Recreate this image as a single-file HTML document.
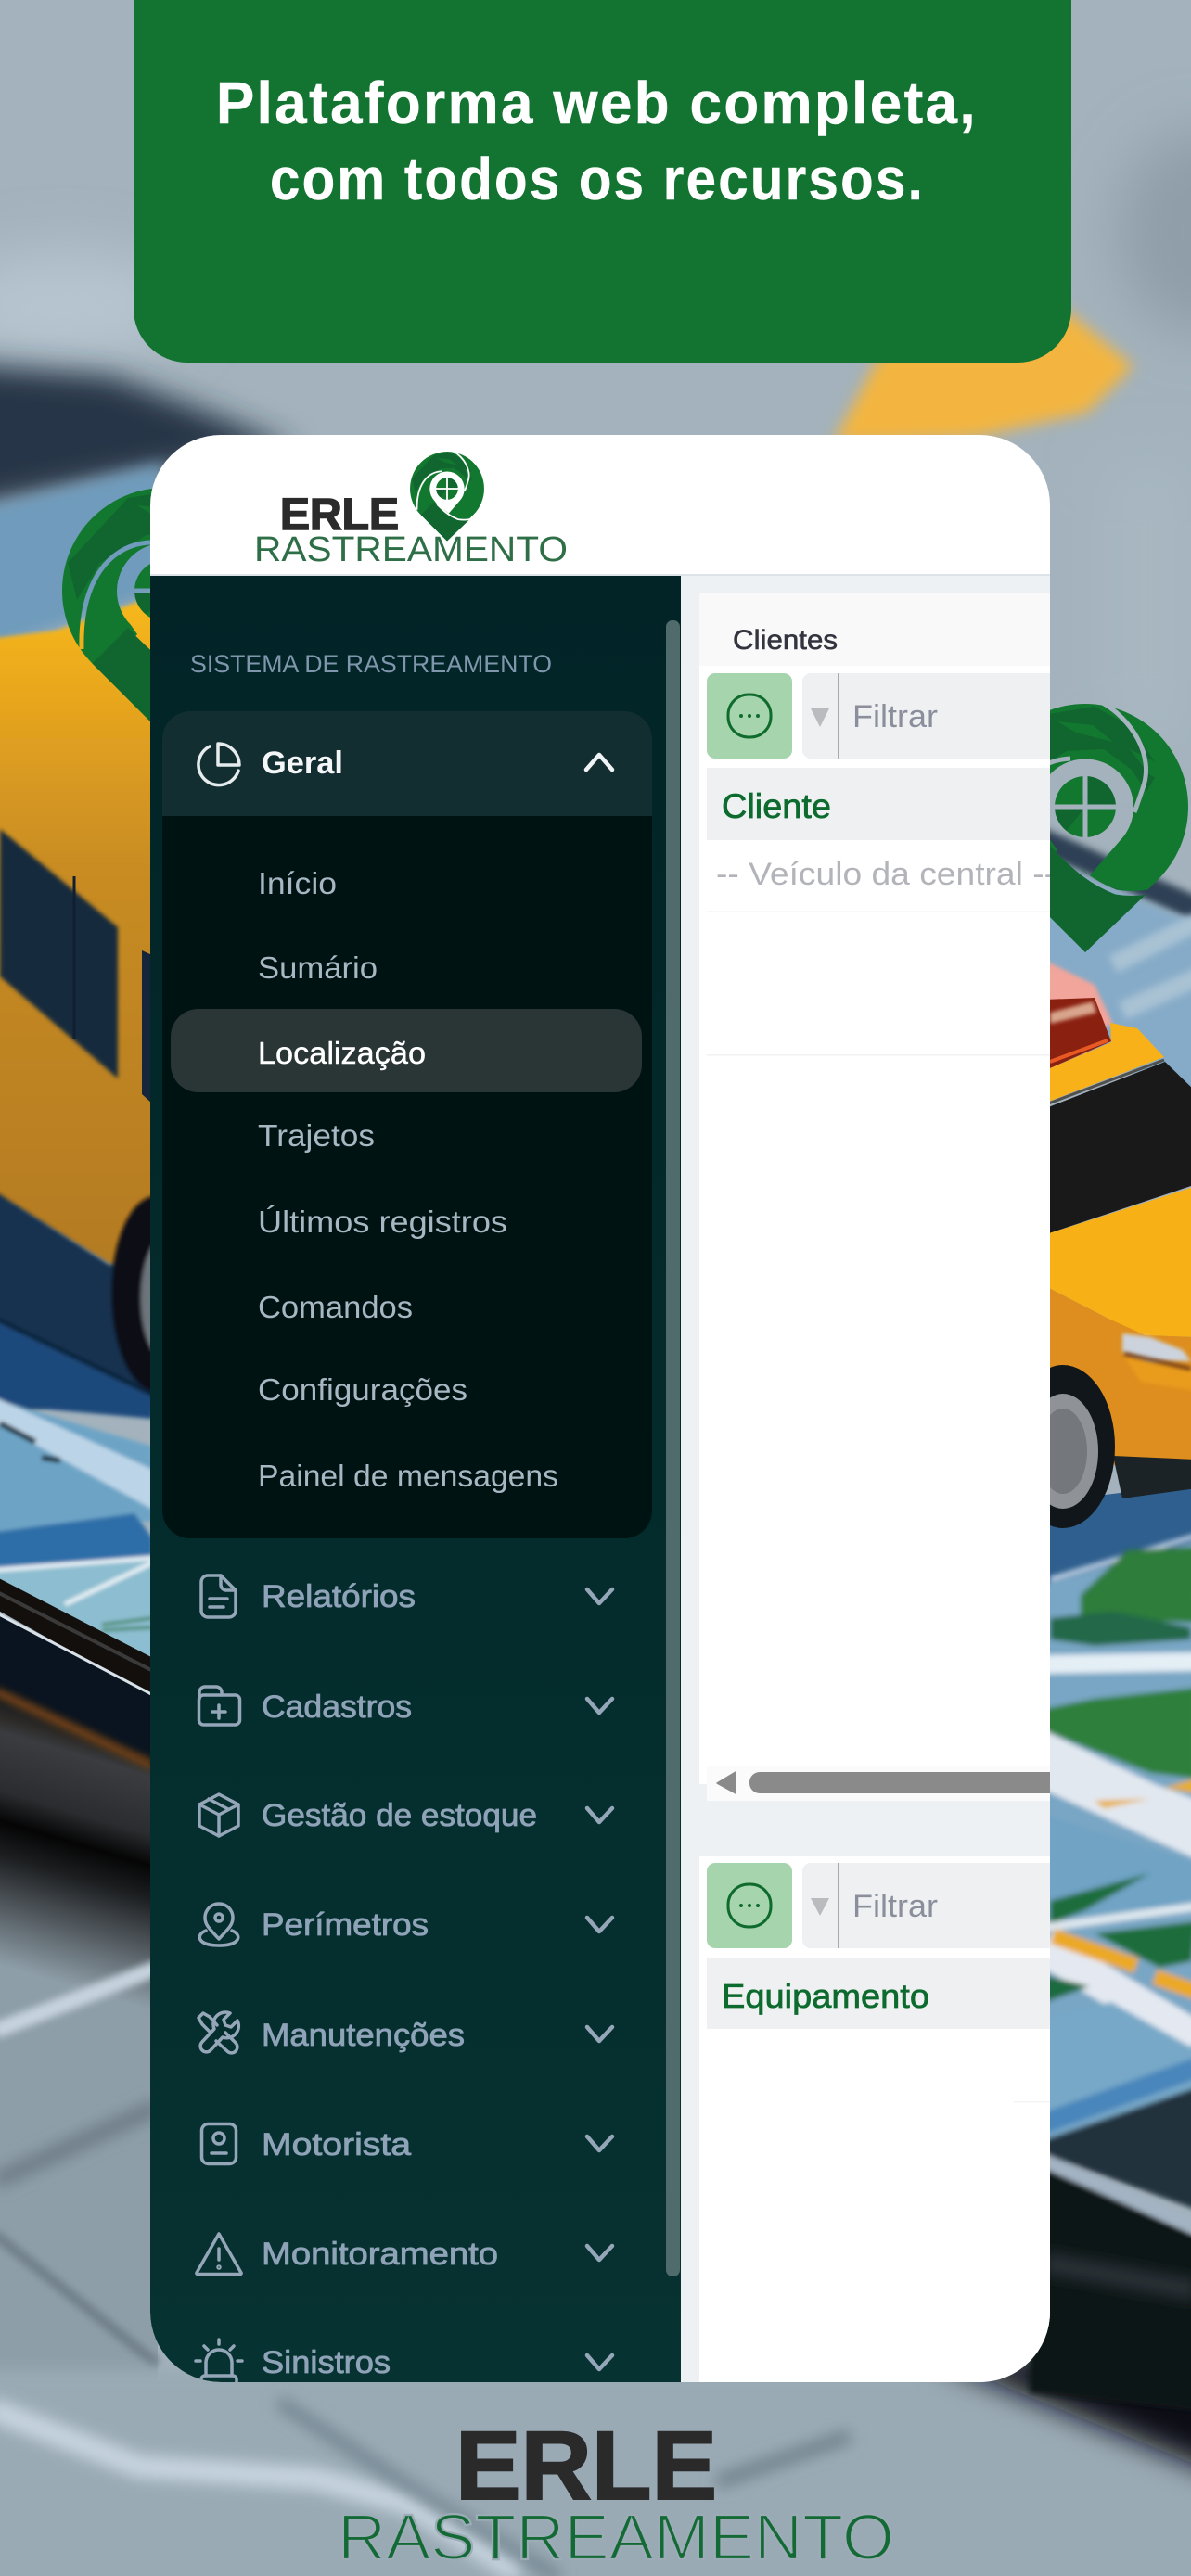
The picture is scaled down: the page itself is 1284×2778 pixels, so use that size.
<!DOCTYPE html>
<html lang="pt-BR">
<head>
<meta charset="utf-8">
<title>ERLE Rastreamento</title>
<style>
html,body{margin:0;padding:0;background:#a4b3bd;width:1284px;height:2778px;overflow:hidden}
svg{display:block}
text{font-family:"Liberation Sans",sans-serif}
.sub{font-size:33px;fill:#a9b7c3}
.main{font-size:34px;fill:#8fa3b8;stroke:#8fa3b8;stroke-width:.8px}
.ic{fill:none;stroke:#94a6b8;stroke-width:3.5;stroke-linecap:round;stroke-linejoin:round}
</style>
</head>
<body>
<svg xmlns="http://www.w3.org/2000/svg" width="1284" height="2778" viewBox="0 0 1284 2778">
<defs>
  <filter id="b2" filterUnits="userSpaceOnUse" x="-100" y="-100" width="1500" height="3000"><feGaussianBlur stdDeviation="2"/></filter>
  <filter id="b3" filterUnits="userSpaceOnUse" x="-100" y="-100" width="1500" height="3000"><feGaussianBlur stdDeviation="3"/></filter>
  <filter id="b4" filterUnits="userSpaceOnUse" x="-100" y="-100" width="1500" height="3000"><feGaussianBlur stdDeviation="4"/></filter>
  <filter id="b8" filterUnits="userSpaceOnUse" x="-100" y="-100" width="1500" height="3000"><feGaussianBlur stdDeviation="8"/></filter>
  <filter id="b16" filterUnits="userSpaceOnUse" x="-100" y="-100" width="1500" height="3000"><feGaussianBlur stdDeviation="16"/></filter>
  <filter id="b30" filterUnits="userSpaceOnUse" x="-100" y="-100" width="1500" height="3000"><feGaussianBlur stdDeviation="30"/></filter>
  <clipPath id="card2"><rect x="162" y="469" width="970" height="2100" rx="76" ry="76"/></clipPath>
  <linearGradient id="side" x1="0" y1="0" x2="0" y2="1"><stop offset="0" stop-color="#022427"/><stop offset="1" stop-color="#063231"/></linearGradient>
  <linearGradient id="busY" x1="0" y1="0" x2="0" y2="1"><stop offset="0" stop-color="#f8b919"/><stop offset=".18" stop-color="#e4a31f"/><stop offset=".4" stop-color="#c88c24"/><stop offset="1" stop-color="#b37a20"/></linearGradient>
  <linearGradient id="lowgray" gradientUnits="userSpaceOnUse" x1="0" y1="1820" x2="-82" y2="2095">
    <stop offset="0" stop-color="#0a1420"/><stop offset=".1" stop-color="#2b2926"/><stop offset=".16" stop-color="#3a3c40"/>
    <stop offset=".37" stop-color="#2a2c2f"/><stop offset=".48" stop-color="#050505"/><stop offset=".6" stop-color="#1c1e20"/>
    <stop offset=".77" stop-color="#4e555a"/><stop offset="1" stop-color="#8e9ea8"/>
  </linearGradient>
  <mask id="pm" maskUnits="userSpaceOnUse" x="-130" y="-130" width="260" height="300">
    <rect x="-130" y="-130" width="260" height="300" fill="#fff"/>
    <path d="M5 74 L37 37 A52 52 0 1 0 -37 37 L-30 47 Z" fill="#000"/>
    <circle r="33" fill="#fff"/>
    <rect x="-34" y="-2.5" width="68" height="5" fill="#000"/>
    <rect x="-2.5" y="-34" width="5" height="68" fill="#000"/>
    <path d="M17 -113 C50 -95 75 -55 62 -20 Q58 -8 53 6" fill="none" stroke="#000" stroke-width="5"/>
    <path d="M-30 47 C-14 62 2 80 33 92 Q50 95 68 92" fill="none" stroke="#000" stroke-width="5"/>
    <path d="M-16 -52 C-60 -50 -92 -10 -90 63" fill="none" stroke="#000" stroke-width="5"/>
  </mask>
  <g id="pin">
    <g mask="url(#pm)">
      <path d="M0 157 L-78.5 78.5 A111 111 0 1 1 78.5 78.5 Z" fill="#12782f"/>
      <path d="M0 157 L-78.5 78.5 L-40 40 C-10 72 30 95 68 92 Z" fill="#116630"/>
      <path d="M-40 -100 L10 -108 L52 -85 L80 -40 L66 -16 L50 -40 L20 -62 L-20 -60 L-70 -30 L-95 10 L-105 -30 Z" fill="#116630"/>
      <path d="M-30 -92 L8 -88 L30 -70 L-10 -80 Z M48 -62 L88 -42 L100 -20 L70 -34 Z M60 -10 L95 -12 L84 0 Z" fill="#12782f"/>
      <path d="M0 -33 A33 33 0 0 1 33 0 L0 0 Z M0 0 L-33 0 A33 33 0 0 0 -20 26 Z" fill="#116630"/>
    </g>
  </g>
</defs>

<!-- BACKGROUND -->
<rect width="1284" height="2778" fill="#a3b2bc"/>
<g filter="url(#b30)">
  <ellipse cx="70" cy="330" rx="130" ry="60" fill="#b6c5cf"/>
  <ellipse cx="1295" cy="250" rx="90" ry="110" fill="#8f9ea8"/>
  <rect x="1190" y="500" width="94" height="300" fill="#a8b7c1"/>
</g>
<path d="M1150 335 L1222 395 L1172 445 L1050 472 L898 478 L950 380 Z" fill="#f3b540" filter="url(#b8)"/>
<path d="M-40 392 L120 405 L225 445 L320 485 L200 505 L164 510 L-40 550 Z" fill="#283447" filter="url(#b16)"/>
<path d="M-20 548 L175 500 L175 640 L-20 705 Z" fill="#6f9bbc" filter="url(#b8)"/>
<path d="M-20 690 L60 680 L175 640 L175 1380 L130 1370 L13 1300 L-20 1290 Z" fill="url(#busY)" filter="url(#b2)"/>
<path d="M0 894 L127 1000 L127 1163 L0 1053 Z" fill="#17293d" filter="url(#b2)"/>
<path d="M80 945 L80 1120" stroke="#0f1f30" stroke-width="3"/>
<path d="M153 1025 L164 1030 L164 1190 L153 1180 Z" fill="#15263a"/>
<!-- left road -->
<g filter="url(#b2)">
<path d="M-5 1285 L118 1364 L170 1350 L170 1520 L-5 1520 Z" fill="#12304f"/>
<ellipse cx="168" cy="1395" rx="48" ry="105" fill="#0b0f14"/>
<ellipse cx="174" cy="1400" rx="22" ry="62" fill="#6d747c"/>
<path d="M-5 1422 L165 1504 L165 1530 L-5 1515 Z" fill="#1a4a7c"/>
<path d="M-5 1422 L165 1504" stroke="#0e2238" stroke-width="5" fill="none"/>
<path d="M-5 1509 L165 1560 L165 1640 L-5 1660 Z" fill="#6da4c6"/>
<path d="M-5 1507 L165 1585 L165 1628 L-5 1534 Z" fill="#bcd4e7"/>
<path d="M0 1535 L38 1555 M45 1572 L65 1575" stroke="#24303e" stroke-width="6" fill="none"/>
<path d="M-5 1652 L145 1632 L165 1660 L165 1700 L-5 1700 Z" fill="#2f6ea8"/>
<path d="M-5 1693 L165 1680 L165 1800 L-5 1715 Z" fill="#8cbdd0"/>
<path d="M-5 1693 L165 1680 M70 1730 L165 1685" stroke="#e7f0f5" stroke-width="5" fill="none"/>
<path d="M110 1752 L165 1745 M110 1758 L165 1755" stroke="#2d7d45" stroke-width="3" fill="none"/>
</g>
<path d="M-5 1740 L170 1830 L170 2569 L-5 2569 Z" fill="url(#lowgray)"/>
<path d="M-5 1700 L165 1788 L165 1830 L-5 1735 Z" fill="#120f0d"/>
<path d="M-5 1716 L165 1802" stroke="#3a3a3a" stroke-width="4" fill="none"/>
<path d="M-5 1739 L165 1828" stroke="#d9e2e9" stroke-width="3" fill="none"/>
<path d="M-5 1742 L165 1832 L165 1905 L-5 1822 Z" fill="#0a1420"/>
<path d="M-5 1824 L165 1904" stroke="#6f3f12" stroke-width="10" fill="none" filter="url(#b4)"/>
<path d="M-5 2190 L170 2122" stroke="#c6d3de" stroke-width="17" fill="none" filter="url(#b4)"/>
<path d="M-5 2352 L170 2272" stroke="#6d7c86" stroke-width="18" fill="none" filter="url(#b8)"/>
<path d="M-5 2410 L170 2550" stroke="#718089" stroke-width="12" fill="none" filter="url(#b4)"/>

<!-- bottom zone -->
<rect x="-50" y="2555" width="1400" height="280" fill="#9aaab5" filter="url(#b8)"/>
<path d="M-10 2598 L150 2660 L340 2673 L440 2700 L560 2775" stroke="#c8d5e0" stroke-width="24" fill="none" filter="url(#b8)"/>
<path d="M300 2590 L434 2677 L603 2780" stroke="#728590" stroke-width="14" fill="none" filter="url(#b8)"/>
<path d="M773 2677 L916 2627" stroke="#6f7f89" stroke-width="14" fill="none" filter="url(#b8)"/>
<path d="M1000 2540 L1320 2540 L1320 2670 L1210 2625 Z" fill="#0f1114" filter="url(#b16)"/>

<!-- right side -->
<path d="M1120 905 L1300 985" stroke="#2e3f55" stroke-width="26" fill="none" filter="url(#b4)"/>
<path d="M1120 925 L1300 1000 L1300 1200 L1120 1100 Z" fill="#86abc8" filter="url(#b4)"/>
<path d="M1200 1040 L1300 990 M1210 1090 L1300 1050" stroke="#a9c2d4" stroke-width="20" fill="none" filter="url(#b4)"/>
<path d="M1125 1035 L1180 1062 L1200 1105 L1125 1120 Z" fill="#f2a59a" filter="url(#b2)"/>
<path d="M1125 1078 L1180 1076 L1198 1123 L1125 1155 Z" fill="#8a2010"/>
<path d="M1132 1092 L1178 1080 L1182 1092 L1132 1104 Z" fill="#d8a58c" filter="url(#b2)"/>
<path d="M1132 1145 L1194 1122" stroke="#e85a24" stroke-width="4" fill="none"/>
<path d="M1125 1155 L1198 1124 L1197 1103 L1226 1109 L1255 1140 L1125 1190 Z" fill="#f8b119"/>
<path d="M1125 1196 L1256 1145 L1290 1178 L1290 1277 L1125 1332 Z" fill="#1a191a"/>
<path d="M1125 1192 L1255 1143" stroke="#50514e" stroke-width="3" fill="none"/>
<path d="M1125 1620 L1290 1600 L1290 1720 L1125 1720 Z" fill="#2f5f8e"/>
<path d="M1125 1332 L1290 1279 L1290 1442 L1230 1440 L1195 1422 L1125 1386 Z" fill="#f7b117"/>
<path d="M1125 1386 L1195 1422 L1235 1440 L1290 1442 L1290 1580 L1125 1580 Z" fill="#dd8e1e"/>
<path d="M1210 1460 L1290 1475 L1290 1500 L1230 1490 Z" fill="#e99c1e" filter="url(#b2)"/>
<path d="M1210 1438 L1240 1442 L1275 1456 L1284 1468 L1240 1468 L1210 1458 Z" fill="#ccd3dd" filter="url(#b2)"/>
<path d="M1212 1460 L1284 1476" stroke="#6a3412" stroke-width="4" fill="none" filter="url(#b2)"/>
<path d="M1200 1570 L1290 1574 L1290 1605 L1210 1616 Z" fill="#1b2326"/>
<ellipse cx="1146" cy="1560" rx="56" ry="88" fill="#11161a"/>
<ellipse cx="1146" cy="1565" rx="38" ry="62" fill="#8f9397"/>
<ellipse cx="1146" cy="1565" rx="26" ry="46" fill="#74787c"/>
<g filter="url(#b3)">
<path d="M1125 1708 L1290 1662 L1290 2300 L1125 2340 Z" fill="#78a6c4"/>
<path d="M1132 1703 L1290 1656" stroke="#c4d4e6" stroke-width="5" fill="none"/>
<path d="M1165 1720 L1215 1672 L1290 1668 L1290 1750 L1165 1745 Z" fill="#2e7d3b"/>
<path d="M1132 1745 L1200 1738 L1284 1755 L1284 1768 L1180 1775 L1132 1768 Z" fill="#23684a"/>
<path d="M1125 1795 L1290 1792" stroke="#e4eef5" stroke-width="20" fill="none"/>
<path d="M1125 1843 L1180 1832 L1290 1820 L1290 1918 L1240 1912 L1125 1866 Z" fill="#2f7f3a"/>
<path d="M1125 1866 L1245 1924 L1290 1941 L1290 2005 L1125 1930 Z" fill="#e2e8f0"/>
<path d="M1180 1942 L1240 1940 L1190 1950 Z M1255 1928 L1290 1918 L1290 1934 Z" fill="#e8ad2a"/>
<path d="M1125 1958 L1290 2010 L1290 2050 L1125 2073 Z" fill="#6fa3c4"/>
<path d="M1132 2050 L1240 2020 L1170 2060 L1132 2075 Z" fill="#1f6d3a"/>
<path d="M1125 2079 L1290 2056" stroke="#dfe8ef" stroke-width="9" fill="none"/>
<path d="M1180 2085 L1290 2072 L1285 2115 L1250 2122 Z" fill="#1e6d3a"/>
<path d="M1125 2100 L1290 2199" stroke="#e4e9f1" stroke-width="38" fill="none"/>
<path d="M1135 2088 L1225 2120 M1245 2132 L1290 2148" stroke="#eba928" stroke-width="17" fill="none"/>
<path d="M1125 2130 L1175 2142 L1125 2160 Z" fill="#1d6a3f"/>
<path d="M1125 2176 L1198 2159 L1290 2211 L1290 2251 L1125 2303 Z" fill="#77a8c8"/>
<path d="M1125 2290 L1290 2230" stroke="#4a86bb" stroke-width="22" fill="none"/>
<path d="M1125 2308 L1290 2251 L1290 2383 L1125 2323 Z" fill="#22313e"/>
<path d="M1110 2330 L1290 2412 L1290 2600 L1110 2580 Z" fill="#101215"/>
<path d="M1125 2330 L1290 2402" stroke="#a3b3c3" stroke-width="15" fill="none"/>
</g>
<path d="M1125 2440 L1290 2470" stroke="#2a3037" stroke-width="22" fill="none" filter="url(#b8)"/>

<!-- pins behind card -->
<use href="#pin" transform="translate(1170,870)"/>
<use href="#pin" transform="translate(178,637)"/>

<!-- GREEN TITLE -->
<rect x="144" y="-80" width="1011" height="471" rx="58" ry="58" fill="#137330"/>
<text x="233" y="133" font-size="64" font-weight="700" letter-spacing="2.5" fill="#fff" stroke="#fff" stroke-width=".5" textLength="821" lengthAdjust="spacingAndGlyphs">Plataforma web completa,</text>
<text x="291" y="215" font-size="64" font-weight="700" letter-spacing="2.5" fill="#fff" stroke="#fff" stroke-width=".5" textLength="706" lengthAdjust="spacingAndGlyphs">com todos os recursos.</text>

<!-- CARD -->
<g clip-path="url(#card2)">
  <rect x="162" y="469" width="970" height="2100" fill="#fff"/>
  <rect x="162" y="619" width="970" height="2" fill="#dde3e8"/>
  <rect x="162" y="621" width="572" height="1948" fill="url(#side)"/>
  <rect x="718" y="669" width="15" height="1786" rx="7" fill="#4f6b6b"/>

  <rect x="734" y="621" width="398" height="1948" fill="#edf1f4"/>
  <rect x="754" y="640" width="378" height="1302" fill="#fff"/>
  <rect x="754" y="640" width="378" height="78" fill="#f9f9f9"/>
  <rect x="754" y="1924" width="8" height="18" fill="#edf1f4"/>
  <rect x="762" y="1904" width="370" height="38" fill="#fbfbfb"/>
  <rect x="754" y="2002" width="378" height="567" fill="#fff"/>

  <text x="790" y="700" font-size="30" fill="#33343f" stroke="#33343f" stroke-width=".6" textLength="113" lengthAdjust="spacingAndGlyphs">Clientes</text>

  <rect x="762" y="726" width="92" height="92" rx="9" fill="#a6d4ad"/>
  <rect x="865" y="726" width="290" height="92" rx="9" fill="#eef0f2"/>
  <rect x="903" y="726" width="2" height="92" fill="#a8a9ab"/>
  <path d="M874 764 H894 L884 784 Z" fill="#b9bbbe"/>
  <rect x="785" y="749" width="46" height="46" rx="22" fill="none" stroke="#0f6b2d" stroke-width="3"/>
  <circle cx="799" cy="772" r="2" fill="#0f6b2d"/><circle cx="808" cy="772" r="2" fill="#0f6b2d"/><circle cx="817" cy="772" r="2" fill="#0f6b2d"/>
  <text x="919" y="784" font-size="34" fill="#8b8f9b" textLength="92" lengthAdjust="spacingAndGlyphs">Filtrar</text>

  <rect x="762" y="828" width="370" height="78" fill="#eef0f2"/>
  <text x="778" y="882" font-size="37" fill="#0d6b2e" stroke="#0d6b2e" stroke-width=".7" textLength="118" lengthAdjust="spacingAndGlyphs">Cliente</text>
  <text x="772" y="954" font-size="34" fill="#b3b4ba" textLength="366" lengthAdjust="spacingAndGlyphs">-- Veículo da central --</text>
  <rect x="762" y="982" width="370" height="1" fill="#f8f8f8"/>
  <rect x="762" y="1137" width="370" height="1.5" fill="#f1f2f3"/>

  <path d="M793 1911 V1934 L773 1923 Z" fill="#8a8a8a" stroke="#8a8a8a" stroke-width="1.5" stroke-linejoin="round"/>
  <rect x="808" y="1911" width="340" height="23" rx="11" fill="#8a8a8a"/>

  <rect x="762" y="2009" width="92" height="92" rx="9" fill="#a6d4ad"/>
  <rect x="865" y="2009" width="290" height="92" rx="9" fill="#eef0f2"/>
  <rect x="903" y="2009" width="2" height="92" fill="#a8a9ab"/>
  <path d="M874 2047 H894 L884 2066 Z" fill="#b9bbbe"/>
  <rect x="785" y="2032" width="46" height="46" rx="22" fill="none" stroke="#0f6b2d" stroke-width="3"/>
  <circle cx="799" cy="2055" r="2" fill="#0f6b2d"/><circle cx="808" cy="2055" r="2" fill="#0f6b2d"/><circle cx="817" cy="2055" r="2" fill="#0f6b2d"/>
  <text x="919" y="2067" font-size="34" fill="#8b8f9b" textLength="92" lengthAdjust="spacingAndGlyphs">Filtrar</text>
  <rect x="762" y="2111" width="370" height="77" fill="#eef0f2"/>
  <text x="778" y="2165" font-size="36" fill="#0d6b2e" stroke="#0d6b2e" stroke-width=".7" textLength="224" lengthAdjust="spacingAndGlyphs">Equipamento</text>
  <rect x="1093" y="2266" width="39" height="1.5" fill="#f3f4f5"/>

  <text x="205" y="725" font-size="27" fill="#7f96ad" textLength="390" lengthAdjust="spacingAndGlyphs">SISTEMA DE RASTREAMENTO</text>

  <path d="M175 1659 V797 a30 30 0 0 1 30 -30 H673 a30 30 0 0 1 30 30 V1629 a30 30 0 0 1 -30 30 H205 a30 30 0 0 1 -30 -30Z" fill="#001313"/>
  <path d="M175 880 V797 a30 30 0 0 1 30 -30 H673 a30 30 0 0 1 30 30 V880 Z" fill="#132e31"/>

  <path d="M226 805 A22 22 0 1 0 257 831" fill="none" stroke="#e6ebee" stroke-width="3.5" stroke-linecap="round"/>
  <path d="M235 802 A23 23 0 0 1 258 825 H235 Z" fill="none" stroke="#e6ebee" stroke-width="3.5" stroke-linejoin="round"/>
  <text x="282" y="834" font-size="34" font-weight="700" fill="#f4f6f8" textLength="88" lengthAdjust="spacingAndGlyphs">Geral</text>
  <path d="M632 830 L646 814 L660 830" fill="none" stroke="#f1f4f6" stroke-width="4.5" stroke-linecap="round" stroke-linejoin="round"/>

  <rect x="184" y="1088" width="508" height="90" rx="30" fill="#2a3536"/>
  <text class="sub" x="278" y="964" textLength="85" lengthAdjust="spacingAndGlyphs">Início</text>
  <text class="sub" x="278" y="1055" textLength="129" lengthAdjust="spacingAndGlyphs">Sumário</text>
  <text class="sub" x="278" y="1147" style="fill:#fff" stroke="#fff" stroke-width=".4" textLength="181" lengthAdjust="spacingAndGlyphs">Localização</text>
  <text class="sub" x="278" y="1236" textLength="126" lengthAdjust="spacingAndGlyphs">Trajetos</text>
  <text class="sub" x="278" y="1329" textLength="269" lengthAdjust="spacingAndGlyphs">Últimos registros</text>
  <text class="sub" x="278" y="1421" textLength="167" lengthAdjust="spacingAndGlyphs">Comandos</text>
  <text class="sub" x="278" y="1510" textLength="226" lengthAdjust="spacingAndGlyphs">Configurações</text>
  <text class="sub" x="278" y="1603" textLength="324" lengthAdjust="spacingAndGlyphs">Painel de mensagens</text>

  <text class="main" x="282" y="1733" textLength="166" lengthAdjust="spacingAndGlyphs">Relatórios</text>
  <text class="main" x="282" y="1852" textLength="162" lengthAdjust="spacingAndGlyphs">Cadastros</text>
  <text class="main" x="282" y="1969" textLength="297" lengthAdjust="spacingAndGlyphs">Gestão de estoque</text>
  <text class="main" x="282" y="2087" textLength="180" lengthAdjust="spacingAndGlyphs">Perímetros</text>
  <text class="main" x="282" y="2206" textLength="219" lengthAdjust="spacingAndGlyphs">Manutenções</text>
  <text class="main" x="282" y="2324" textLength="161" lengthAdjust="spacingAndGlyphs">Motorista</text>
  <text class="main" x="282" y="2442" textLength="255" lengthAdjust="spacingAndGlyphs">Monitoramento</text>
  <text class="main" x="282" y="2559" textLength="139" lengthAdjust="spacingAndGlyphs">Sinistros</text>

  <g fill="none" stroke="#94a6b8" stroke-width="4.5" stroke-linecap="round" stroke-linejoin="round">
    <path d="M633 1714 L646 1729 L660 1714"/>
    <path d="M633 1832 L646 1847 L660 1832"/>
    <path d="M633 1950 L646 1965 L660 1950"/>
    <path d="M633 2068 L646 2083 L660 2068"/>
    <path d="M633 2186 L646 2201 L660 2186"/>
    <path d="M633 2304 L646 2319 L660 2304"/>
    <path d="M633 2422 L646 2437 L660 2422"/>
    <path d="M633 2540 L646 2555 L660 2540"/>
  </g>

  <g class="ic">
    <path d="M224 1699 H238 L254 1715 V1737 a7 7 0 0 1 -7 7 H224 a7 7 0 0 1 -7 -7 V1706 a7 7 0 0 1 7 -7 Z"/>
    <path d="M238 1699 V1709 a6 6 0 0 0 6 6 H254"/>
    <path d="M226 1724 H245 M226 1733 H241"/>
    <rect x="214.500" y="1828" width="44" height="32" rx="5"/>
    <path d="M215 1832 V1825 a6 6 0 0 1 6 -6 H233 a6 6 0 0 1 6 6 V1828"/>
    <path d="M229 1846 H243 M236 1839 V1853"/>
    <path d="M236 1935 L257 1946 V1969 L236 1980 L215 1969 V1946 Z"/>
    <path d="M215 1946 L236 1957 L257 1946 M236 1957 V1980 M225 1940 L246 1951"/>
    <path d="M236 2091 C226 2080 221 2076 221 2068 A15 15 0 0 1 251 2068 C251 2076 246 2080 236 2091 Z"/>
    <circle cx="236" cy="2068" r="4"/>
    <path d="M222 2082 C211 2086 212 2098 236 2098 C260 2098 261 2086 250 2082"/>
    <path d="M256 2179 L249 2186 L243 2184 L241 2178 L248 2171 A13 13 0 0 0 231 2188 L218 2202 A6 6 0 0 0 227 2211 L240 2197 A13 13 0 0 0 256 2179 Z"/>
    <path d="M226 2191 L218 2183 L214 2176 L219 2171 L226 2175 L234 2184 M233 2201 L245 2212 A5.500 5.500 0 0 0 254 2203 L243 2192"/>
    <rect x="217.500" y="2290.500" width="37" height="43" rx="7"/>
    <circle cx="236" cy="2306" r="6"/>
    <path d="M228 2322 H244"/>
    <path d="M236 2409 L260 2451 a1 1 0 0 1 -1 1.500 H213 a1 1 0 0 1 -1 -1.500 Z"/>
    <path d="M236 2425 V2437"/>
    <circle cx="236" cy="2445" r="1"/>
    <path d="M222 2562 V2548 a14 14 0 0 1 28 0 V2562"/>
    <rect x="217" y="2562" width="38" height="18" rx="4"/>
    <path d="M236 2523 V2528 M220 2530 L224 2534 M252 2530 L248 2534 M211 2546 H216 M256 2546 H261"/>
  </g>

  <text x="302" y="571" font-size="48" font-weight="700" fill="#2b2b2b" stroke="#2b2b2b" stroke-width="1.6" textLength="128" lengthAdjust="spacingAndGlyphs">ERLE</text>
  <use href="#pin" transform="translate(482,527) scale(.36)"/>
  <text x="274" y="605" font-size="38" fill="#2f6f47" textLength="338" lengthAdjust="spacingAndGlyphs">RASTREAMENTO</text>
</g>

<!-- bottom logo -->
<text x="491" y="2695" font-size="105" font-weight="700" fill="#2a2a2a" stroke="#2a2a2a" stroke-width="2" textLength="282" lengthAdjust="spacingAndGlyphs">ERLE</text>
<text x="364" y="2760" font-size="70" fill="#136a35" stroke="#9cacb7" stroke-width="2.2" textLength="600" lengthAdjust="spacingAndGlyphs">RASTREAMENTO</text>
</svg>
</body>
</html>
